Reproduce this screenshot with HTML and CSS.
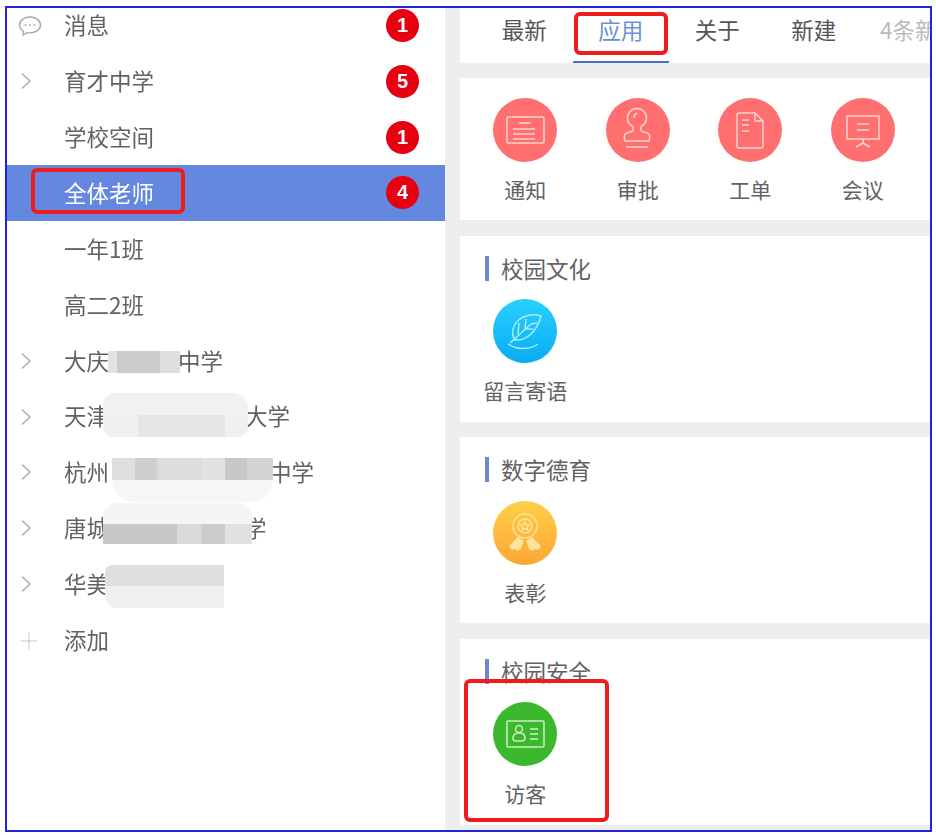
FILE: index.html
```html
<!DOCTYPE html>
<html lang="zh-CN">

<head>
    <meta charset="UTF-8">
    <meta name="viewport" content="width=device-width, initial-scale=1.0">
    <title>应用</title>
    <link rel="stylesheet" href="styles.css">
</head>

<body>
    <div class="frame">
        <div class="app">
            <aside class="side">
                <div class="row">
                    <svg class="row-icon" viewBox="0 0 24 24"><path d="M12 3C6 3 1.500 6.600 1.500 11c0 2.600 1.500 4.800 4 6.300L5 21l4.300-2.400c.9.200 1.800.3 2.700.3 6 0 10.500-3.500 10.500-7.900S18 3 12 3z"/><circle class="dot" cx="7.500" cy="11" r=".9"/><circle class="dot" cx="12" cy="11" r=".9"/><circle class="dot" cx="16.500" cy="11" r=".9"/></svg>
                    <span class="row-name">消息</span>
                    <span class="badge">1</span>
                </div>
                <div class="row">
                    <svg class="row-icon row-chev" viewBox="0 0 24 24"><path d="M8 4.500l8 7.500-8 7.500"/></svg>
                    <span class="row-name">育才中学</span>
                    <span class="badge">5</span>
                </div>
                <div class="row">
                    <span class="row-name">学校空间</span>
                    <span class="badge">1</span>
                </div>
                <div class="row row-active">
                    <span class="row-name">全体老师</span>
                    <span class="badge">4</span>
                </div>
                <div class="row"><span class="row-name">一年1班</span></div>
                <div class="row"><span class="row-name">高二2班</span></div>
                <div class="row">
                    <svg class="row-icon row-chev" viewBox="0 0 24 24"><path d="M8 4.500l8 7.500-8 7.500"/></svg>
                    <span class="row-name">大庆<i class="gap gap-daqing"></i>中学</span>
                    <span class="mask mask-daqing"></span>
                </div>
                <div class="row">
                    <svg class="row-icon row-chev" viewBox="0 0 24 24"><path d="M8 4.500l8 7.500-8 7.500"/></svg>
                    <span class="row-name">天津<i class="gap gap-tianjin"></i>大学</span>
                    <span class="mask mask-tianjin"></span>
                </div>
                <div class="row">
                    <svg class="row-icon row-chev" viewBox="0 0 24 24"><path d="M8 4.500l8 7.500-8 7.500"/></svg>
                    <span class="row-name">杭州<i class="gap gap-hangzhou"></i>中学</span>
                    <span class="mask mask-hangzhou"></span>
                </div>
                <div class="row">
                    <svg class="row-icon row-chev" viewBox="0 0 24 24"><path d="M8 4.500l8 7.500-8 7.500"/></svg>
                    <span class="row-name">唐城<i class="gap gap-tangcheng"></i>学</span>
                    <span class="mask mask-tangcheng"></span>
                </div>
                <div class="row">
                    <svg class="row-icon row-chev" viewBox="0 0 24 24"><path d="M8 4.500l8 7.500-8 7.500"/></svg>
                    <span class="row-name">华美</span>
                    <span class="mask mask-huamei"></span>
                </div>
                <div class="row">
                    <svg class="row-icon row-plus" viewBox="0 0 24 24"><path d="M12 2v20M2 12h20"/></svg>
                    <span class="row-name">添加</span>
                </div>
            </aside>

            <main class="main">
                <nav class="panel tabs">
                    <a class="tab">最新</a>
                    <a class="tab tab-active">应用</a>
                    <a class="tab">关于</a>
                    <a class="tab">新建</a>
                    <a class="tab tab-more">4条新消息</a>
                </nav>

                <section class="panel panel-first">
                    <div class="apps">
                        <div class="app-item">
                            <svg class="circle red" viewBox="0 0 64 64"><rect x="14" y="19" width="37" height="26" rx="1.500"/><path d="M26 25h12M20 31h22M20 36h22M20 41h22"/></svg>
                            <span class="app-name">通知</span>
                        </div>
                        <div class="app-item">
                            <svg class="circle red" viewBox="0 0 64 64"><path d="M26 28a9.500 9.500 0 1 1 10 0c-1.500 1-1.500 3-.5 5 1 1.500 7 1 8 4 .5 2 .3 4-.5 6H19c-.8-2-1-4-.5-6 1-3 7-2.500 8-4 1-2 1-4-.5-5z"/><path d="M20 49h22M31 15c-2 1-3 3-3 5"/></svg>
                            <span class="app-name">审批</span>
                        </div>
                        <div class="app-item">
                            <svg class="circle red" viewBox="0 0 64 64"><path d="M21 15h16l8 8v25a2 2 0 0 1-2 2H21a2 2 0 0 1-2-2V17a2 2 0 0 1 2-2zM37 15v8h8M24 22h7M24 27h7M24 33h7"/></svg>
                            <span class="app-name">工单</span>
                        </div>
                        <div class="app-item">
                            <svg class="circle red" viewBox="0 0 64 64"><rect x="16" y="18" width="32" height="23"/><path d="M26 26h12M26 32h12M32 41v4M32 45l-7 4M32 45l7 4"/></svg>
                            <span class="app-name">会议</span>
                        </div>
                    </div>
                </section>

                <section class="panel">
                    <h4 class="panel-title">校园文化</h4>
                    <div class="apps">
                        <div class="app-item">
                            <svg class="circle blue" viewBox="0 0 64 64"><path d="M48 17c-10-3-24 0-28 13-1 4 0 8 2 11 12 1 22-9 26-24zM17 44l21-19M26 24l-1 11M33 20l-1 10M38 25l6-1M33 30l7 0"/><path d="M15 45c7 5 20 7 30 0"/></svg>
                            <span class="app-name">留言寄语</span>
                        </div>
                    </div>
                </section>

                <section class="panel">
                    <h4 class="panel-title">数字德育</h4>
                    <div class="apps">
                        <div class="app-item">
                            <svg class="circle yellow" viewBox="0 0 64 64"><circle cx="32" cy="25" r="12"/><circle cx="32" cy="25" r="7"/><path d="M32 21l1.300 2.800 3 .3-2.300 2 .7 3L32 27.600 29.300 29l.7-3-2.300-2 3-.3z"/><path class="fill" d="M25 37l-8 8 2 3 3-1 2 2 3-1 3-8zM39 37l8 8-2 3-3-1-2 2-3-1-3-8z"/></svg>
                            <span class="app-name">表彰</span>
                        </div>
                    </div>
                </section>

                <section class="panel">
                    <h4 class="panel-title">校园安全</h4>
                    <div class="apps">
                        <div class="app-item">
                            <svg class="circle green" viewBox="0 0 64 64"><rect x="14" y="19" width="37" height="26" rx="1"/><circle cx="26" cy="27" r="3.500"/><path d="M26 31c-4 0-6 2-6 5 0 2 1 3 3 3h6c2 0 3-1 3-3 0-3-2-5-6-5zM37 27h8M37 32h8M37 37h8"/></svg>
                            <span class="app-name">访客</span>
                        </div>
                    </div>
                </section>
            </main>

            <!-- marcas rojas encima de la captura -->
            <div class="mark mark-teachers"></div>
            <div class="mark mark-tab"></div>
            <div class="mark mark-visitor"></div>
        </div>
    </div>
</body>

</html>
```

FILE: styles.css
```css
html {
    box-sizing: border-box;
    font-family: "Noto Sans CJK SC", "Liberation Sans", sans-serif;
    font-size: 16px;
}

*,
*:before,
*:after {
    box-sizing: inherit;
}

body {
    margin: 0;
    padding: 6px 0 0 5px;
    background-color: #fff;
    overflow: hidden;
}

.frame {
    width: 927px;
    height: 826px;
    border: 2px solid #2222e0;
    overflow: hidden;
}

.app {
    position: relative;
    display: flex;
    height: 100%;
    color: #626262;
    filter: blur(.7px);
}

/******* Lista lateral ********/
.side {
    width: 438px;
    flex: none;
    margin-top: -10.700px;
    background-color: #fff;
}

.row {
    position: relative;
    display: flex;
    align-items: center;
    height: 55.900px;
    padding-left: 57px;
    padding-right: 26px;
    font-size: 22.5px;
}

.row-name {
    flex: 1;
    padding-bottom: 2px;
    white-space: nowrap;
}

.row-active {
    background-color: #6488e0;
    color: #fff;
}

.row-icon {
    position: absolute;
    left: 11px;
    top: 17px;
    width: 24px;
    height: 24px;
    fill: none;
    stroke: #aaa;
    stroke-width: 1.400;
}

.row-chev {
    left: 7px;
    top: 16px;
}

.row-plus {
    left: 12px;
    top: 19px;
    width: 20px;
    height: 20px;
    stroke: #bbb;
    stroke-width: 1;
}

.row-icon .dot {
    fill: #aaa;
    stroke: none;
}

.badge {
    width: 33px;
    height: 33px;
    flex: none;
    border-radius: 50%;
    background-color: #e60012;
    color: #fff;
    font-family: "Liberation Sans", sans-serif;
    font-size: 20px;
    font-weight: bold;
    line-height: 33px;
    text-align: center;
}

/******* Zonas borrosas sobre los nombres ********/
.gap {
    display: inline-block;
}

.gap-daqing {
    width: 69px;
}

.gap-tianjin {
    width: 136px;
}

.gap-hangzhou {
    width: 160px;
}

.gap-tangcheng {
    width: 135px;
}

.mask {
    position: absolute;
}

.mask-daqing {
    left: 101px;
    top: 18px;
    width: 72px;
    height: 22px;
    background: linear-gradient(90deg, #e2e2e2 0 12%, #cbcbcb 12% 72%, #dedede 72%);
}

.mask-tianjin {
    left: 96px;
    top: 4px;
    width: 145px;
    height: 44px;
    border-radius: 12px 16px 10px 10px;
    background:
        linear-gradient(90deg, #f0f0f0 0 24%, #e6e6e6 24% 84%, #f0f0f0 84%) bottom / 100% 50% no-repeat,
        #f1f1f1;
}

.mask-hangzhou {
    left: 105px;
    top: 13.500px;
    width: 161px;
    height: 44px;
    border-radius: 0 0 22px 22px;
    background:
        linear-gradient(90deg, #dfdfdf 0 14%, #cfcfcf 14% 28%, #dcdcdc 28% 56%, #e2e2e2 56% 70%, #c8c8c8 70% 84%, #d4d4d4 84%) top / 100% 50% no-repeat,
        #f6f6f6;
}

.mask-tangcheng {
    left: 96px;
    top: 3px;
    width: 149px;
    height: 41px;
    border-radius: 14px 14px 0 0;
    background:
        linear-gradient(90deg, #c8c8c8 0 50%, #dadada 50% 66%, #cccccc 66% 82%, #e2e2e2 82%) bottom / 100% 50% no-repeat,
        #f5f5f5;
}

.mask-huamei {
    left: 98px;
    top: 9px;
    width: 119px;
    height: 43px;
    border-radius: 8px 0 0 12px;
    background: linear-gradient(180deg, #dfdfdf 0 50%, #efefef 50%);
}

/******* Columna derecha ********/
.main {
    flex: 1;
    min-width: 0;
    display: flex;
    flex-direction: column;
    gap: 15.500px;
    padding-left: 15px;
    background-color: #eee;
    overflow: hidden;
}

.panel {
    flex: none;
    height: 186px;
    padding-top: 20px;
    background-color: #fff;
}

.panel-first {
    height: 142px;
}

.tabs {
    display: flex;
    height: 54.500px;
    padding: 0 0 0 16px;
    overflow: hidden;
}

.tab {
    flex: none;
    width: 96.500px;
    height: 100%;
    padding-top: 2px;
    font-size: 22.5px;
    line-height: 38px;
    text-align: center;
    color: #555;
}

.tab-active {
    color: #6c8edb;
    border-bottom: 2px solid #4a6fc8;
}

.tab-more {
    width: auto;
    margin-left: 18px;
    color: #bbb;
}

.panel-title {
    height: 25px;
    margin: 0 0 18.500px 25px;
    padding-left: 12px;
    border-left: 4px solid #6c86d0;
    font-size: 22.5px;
    font-weight: normal;
    line-height: 24px;
}

.apps {
    display: grid;
    grid-template-columns: repeat(4, 112.500px);
    padding-left: 9px;
}

.app-item {
    display: flex;
    flex-direction: column;
    align-items: center;
}

.circle {
    width: 64px;
    height: 64px;
    border-radius: 50%;
    fill: none;
    stroke-width: 1.500;
}

.red {
    background-color: #ff6f70;
    stroke: #ffd5d0;
}

.blue {
    background: linear-gradient(180deg, #2ad0ff, #08acf2);
    stroke: #a8ecff;
}

.yellow {
    background: linear-gradient(180deg, #ffcf45, #fba737);
    stroke: #ffe39a;
}

.yellow .fill {
    fill: #ffe39a;
}

.green {
    background-color: #3cb82e;
    stroke: #c9f0c0;
}

.app-name {
    margin-top: 12px;
    font-size: 21px;
    line-height: 30px;
    white-space: nowrap;
}

/******* Marcas rojas ********/
.mark {
    position: absolute;
    border: 4px solid #ee1c1c;
    border-radius: 6px;
}

.mark-teachers {
    left: 24px;
    top: 160px;
    width: 154px;
    height: 46px;
}

.mark-tab {
    left: 567px;
    top: 4px;
    width: 94px;
    height: 43px;
}

.mark-visitor {
    left: 457px;
    top: 671px;
    width: 145px;
    height: 143px;
}
```
